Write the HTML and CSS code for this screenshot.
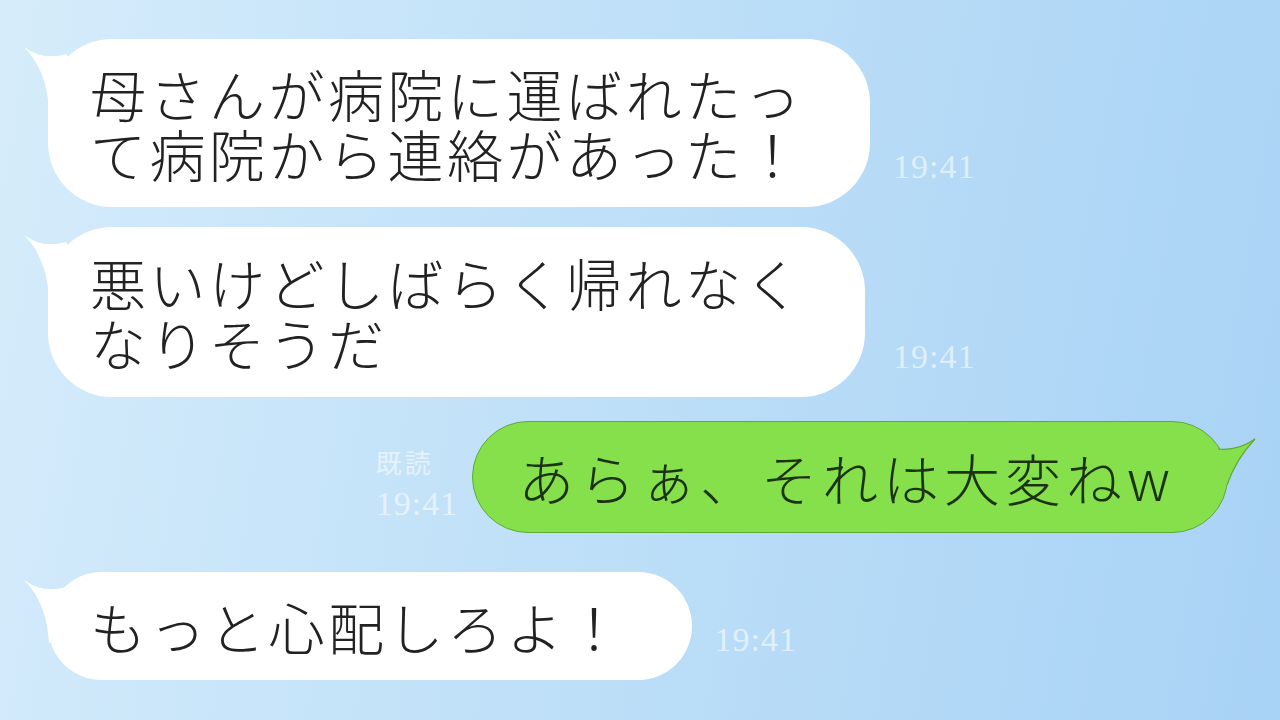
FILE: index.html
```html
<!DOCTYPE html>
<html lang="ja">
  <head>
    <meta charset="UTF-8" />
    <meta name="viewport" content="width=device-width, initial-scale=1.0" />
    <link rel="stylesheet" href="styles.css">
    <title>トーク</title>
  </head>
  <body>
    <div class="chat">
      <div class="row in">
        <div class="bubble white">
          <svg class="tail-left" viewBox="-30 0 80 80" width="80" height="80">
            <path d="M-24 8 Q-5 22 18 15 L42 51 L1 71 Q-1 31 -24 8Z" />
          </svg>
          <p>母さんが病院に運ばれたっ<br />て病院から連絡があった！</p>
        </div>
        <div class="time">19:41</div>
      </div>

      <div class="row in">
        <div class="bubble white wide2">
          <svg class="tail-left" viewBox="-30 0 80 80" width="80" height="80">
            <path d="M-24 8 Q-5 22 18 15 L42 51 L1 71 Q-1 31 -24 8Z" />
          </svg>
          <p>悪いけどしばらく帰れなく<br />なりそうだ</p>
        </div>
        <div class="time t2">19:41</div>
      </div>

      <div class="row out">
        <div class="meta">
          <span class="read">既読</span>
          <span class="time-out">19:41</span>
        </div>
        <div class="bubble green">
          <svg class="tail-right" viewBox="0 0 80 80" width="80" height="80">
            <path class="fill" d="M28 28 Q50 30 67 18 Q48 38 39 64 L5 60 Z" />
            <path class="edge" d="M30 28 Q50 30 67 18 Q48 38 39 64" />
          </svg>
          <p>あらぁ、それは大変ねw</p>
        </div>
      </div>

      <div class="row in">
        <div class="bubble white">
          <svg class="tail-left" viewBox="-30 0 80 80" width="80" height="80">
            <path d="M-24 8 Q-5 22 18 15 L42 51 L1 71 Q-1 31 -24 8Z" />
          </svg>
          <p>もっと心配しろよ！</p>
        </div>
        <div class="time">19:41</div>
      </div>
    </div>
  </body>
</html>
```

FILE: styles.css
```css
* {
  box-sizing: border-box;
}
body {
  margin: 0;
  width: 1280px;
  height: 720px;
  overflow: hidden;
  background: linear-gradient(100deg, #d6ecfb 0%, #bfe0f8 45%, #a8d2f5 100%);
  font-family: "Noto Sans CJK JP", "Noto Sans", sans-serif;
}

.chat {
  display: flex;
  flex-direction: column;
  padding: 39px 52px 0 48px;
}

.row {
  display: flex;
  align-items: flex-end;
  margin-bottom: 20px;
}
.row.out {
  justify-content: flex-end;
  margin-top: 4px;
  margin-bottom: 39px;
}

.bubble {
  position: relative;
  padding: 24px 66px 24px 42px;
}
.bubble p {
  position: relative;
  margin: 0;
  font-size: 56px;
  font-weight: 300;
  letter-spacing: 3.5px;
  line-height: 60px;
  white-space: nowrap;
}

.white {
  background: #fff;
  border-radius: 64px;
  color: #222;
}
.wide2 {
  padding-right: 61px;
  padding-top: 25px;
  padding-bottom: 25px;
}
.tail-left {
  position: absolute;
  left: -30px;
  top: 0;
  fill: #fff;
}

.green {
  background: #86e04c;
  border: 1px solid #5faa37;
  border-radius: 56px;
  color: #1b3312;
  padding: 25px 52px 25px 45px;
}
.green p {
  letter-spacing: 5px;
}
.tail-right {
  position: absolute;
  right: -41px;
  top: -1px;
}
.tail-right .fill {
  fill: #86e04c;
}
.tail-right .edge {
  fill: none;
  stroke: #5faa37;
  stroke-width: 1.2;
}

.time {
  margin: 0 0 23px 23px;
  font-family: "Liberation Serif", serif;
  font-size: 34px;
  line-height: 34px;
  color: rgba(255, 255, 255, 0.58);
  letter-spacing: 1px;
}
.t2 {
  margin-left: 28px;
}

.meta {
  display: flex;
  flex-direction: column;
  margin: 0 14px 8px 0;
  color: rgba(255, 255, 255, 0.58);
  line-height: 42px;
}
.read {
  font-size: 26px;
  letter-spacing: 3px;
}
.time-out {
  font-family: "Liberation Serif", serif;
  font-size: 34px;
  letter-spacing: 1px;
}
```
